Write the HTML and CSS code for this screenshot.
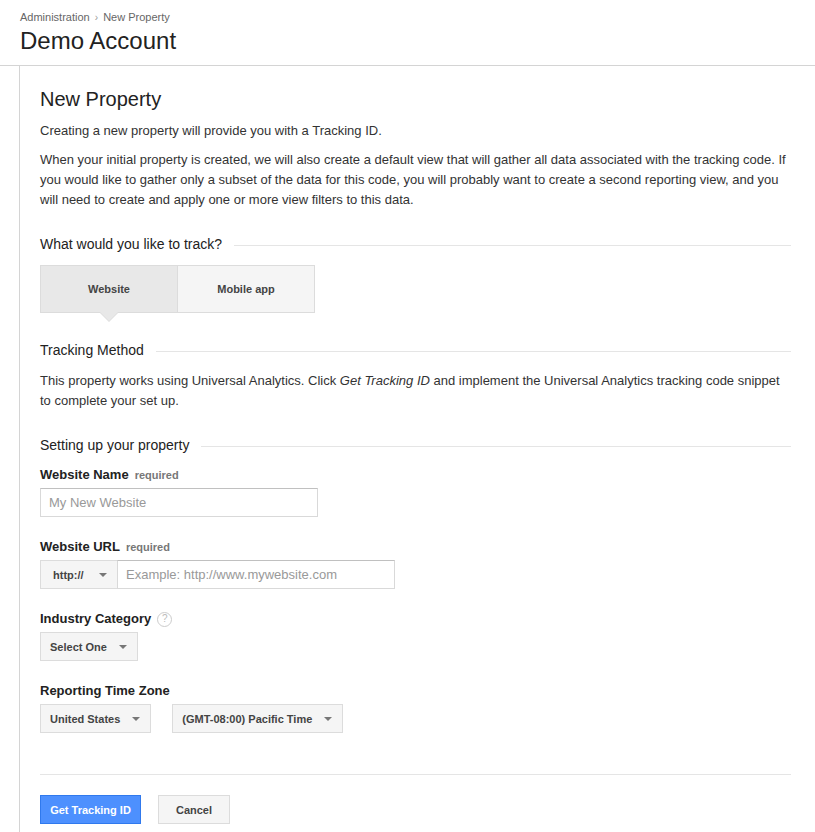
FILE: index.html
```html
<!DOCTYPE html>
<html>
<head>
<meta charset="utf-8">
<link rel="stylesheet" href="styles.css">
</head>
<body>
<header class="top">
  <div class="crumbs">Administration <span class="sep">›</span> New Property</div>
  <h1 class="account">Demo Account</h1>
</header>
<div class="body">
  <div class="side"></div>
  <main class="main">
    <h2 class="title">New Property</h2>
    <p class="p first">Creating a new property will provide you with a Tracking ID.</p>
    <p class="p">When your initial property is created, we will also create a default view that will gather all data associated with the tracking code. If you would like to gather only a subset of the data for this code, you will probably want to create a second reporting view, and you will need to create and apply one or more view filters to this data.</p>

    <div class="section s-track"><span>What would you like to track?</span><i></i></div>
    <div class="tabs">
      <div class="tab active">Website</div>
      <div class="tab">Mobile app</div>
    </div>

    <div class="section s-method"><span>Tracking Method</span><i></i></div>
    <p class="p">This property works using Universal Analytics. Click <em>Get Tracking ID</em> and implement the Universal Analytics tracking code snippet to complete your set up.</p>

    <div class="section s-setup"><span>Setting up your property</span><i></i></div>

    <div class="field">
      <div class="label">Website Name <span class="req">required</span></div>
      <div class="input w-name">My New Website</div>
    </div>
    <div class="field">
      <div class="label">Website URL <span class="req">required</span></div>
      <div class="row">
        <div class="select joined">http://<b class="caret"></b></div>
        <div class="input w-url">Example: http://www.mywebsite.com</div>
      </div>
    </div>
    <div class="field">
      <div class="label">Industry Category <span class="help">?</span></div>
      <div class="row">
        <div class="select">Select One<b class="caret"></b></div>
      </div>
    </div>
    <div class="field">
      <div class="label">Reporting Time Zone</div>
      <div class="row gap">
        <div class="select">United States<b class="caret"></b></div>
        <div class="select">(GMT-08:00) Pacific Time<b class="caret"></b></div>
      </div>
    </div>
    <div class="divider"></div>
    <div class="actions">
      <div class="btn primary">Get Tracking ID</div>
      <div class="btn">Cancel</div>
    </div>
  </main>
</div>
</body>
</html>
```
FILE: styles.css
```css
* { box-sizing: border-box; }
html, body { margin: 0; padding: 0; background: #fff; }
body { font-family: "Liberation Sans", Arial, sans-serif; color: #333; font-size: 13px; }

.top { padding: 10px 20px 0; height: 66px; border-bottom: 1px solid #d4d4d4; }
.crumbs { font-size: 11px; color: #666; line-height: 14px; }
.crumbs .sep { color: #999; font-size: 10px; margin: 0 2px; }
.account { margin: 2px 0 0; font-weight: normal; font-size: 24px; line-height: 28px; color: #222; }

.body { display: flex; min-height: 770px; }
.side { width: 20px; border-right: 1px solid #d4d4d4; flex: none; }
.main { flex: 1; padding: 20px 24px 0 20px; }

.title { margin: 1px 0 0; font-size: 20px; font-weight: normal; color: #222; line-height: 24px; }
.p { margin: 0; line-height: 20px; font-size: 13px; color: #333; }
.p.first { margin-top: 10px; margin-bottom: 9px; }
.p em { font-style: italic; }

.section { display: flex; align-items: center; font-size: 14px; color: #222; line-height: 18px; }
.section i { flex: 1; height: 1px; background: #e5e5e5; margin-left: 12px; margin-top: 2px; }
.s-track { margin-top: 25px; }
.s-method { margin-top: 28px; margin-bottom: 12px; }
.s-setup { margin-top: 25px; }

.tabs { display: flex; margin-top: 12px; width: 275px; position: relative; }
.tab { flex: 1; height: 48px; display: flex; align-items: center; justify-content: center; font-size: 11px; font-weight: bold; color: #444; background: #f5f5f5; border: 1px solid #dcdcdc; position: relative; }
.tab + .tab { border-left: none; }
.tab.active { background: #e8e8e8; }
.tab.active::after { content: ""; position: absolute; left: 50%; bottom: -9px; margin-left: -9px; width: 0; height: 0; border-left: 9px solid transparent; border-right: 9px solid transparent; border-top: 9px solid #e8e8e8; }
.tab.active::before { content: ""; position: absolute; left: 50%; bottom: -10px; margin-left: -10px; width: 0; height: 0; border-left: 10px solid transparent; border-right: 10px solid transparent; border-top: 10px solid #dcdcdc; }

.field { margin-top: 12px; }
.field + .field { margin-top: 21px; }
.label { font-size: 13px; font-weight: bold; color: #222; line-height: 18px; display: flex; align-items: center; }
.req { font-size: 11px; color: #777; margin-left: 6px; font-weight: bold; }
.help { display: inline-flex; width: 15px; height: 15px; border: 1px solid #ccc; border-radius: 50%; color: #bbb; font-size: 10px; font-weight: normal; align-items: center; justify-content: center; margin-left: 6px; }

.input { height: 29px; border: 1px solid #d9d9d9; border-top-color: #c0c0c0; padding: 0 8px; line-height: 27px; color: #999; font-size: 13px; margin-top: 4px; }
.w-name { width: 278px; }
.w-url { width: 278px; margin-top: 0; }
.row { display: flex; margin-top: 4px; }
.row.gap { gap: 21px; }
.select { height: 29px; display: flex; align-items: center; padding: 0 10px 0 9px; background: #f5f5f5; border: 1px solid #dcdcdc; font-size: 11px; font-weight: bold; color: #444; }
.select.joined { width: 77px; border-right: none; padding-left: 12px; }
.caret { width: 0; height: 0; border-left: 4px solid transparent; border-right: 4px solid transparent; border-top: 4px solid #777; }
.select .caret { margin-left: 12px; }
.select.joined .caret { margin-left: auto; }

.divider { height: 1px; background: #e5e5e5; margin-top: 41px; }
.actions { display: flex; gap: 17px; margin-top: 20px; }
.btn { height: 29px; display: flex; align-items: center; justify-content: center; padding: 0 16px; border: 1px solid #dcdcdc; background: #f5f5f5; font-size: 11px; font-weight: bold; color: #444; width: 72px; }
.btn.primary { background: #4d90fe; border-color: #3079ed; color: #fff; width: 101px; padding: 0; }
```
